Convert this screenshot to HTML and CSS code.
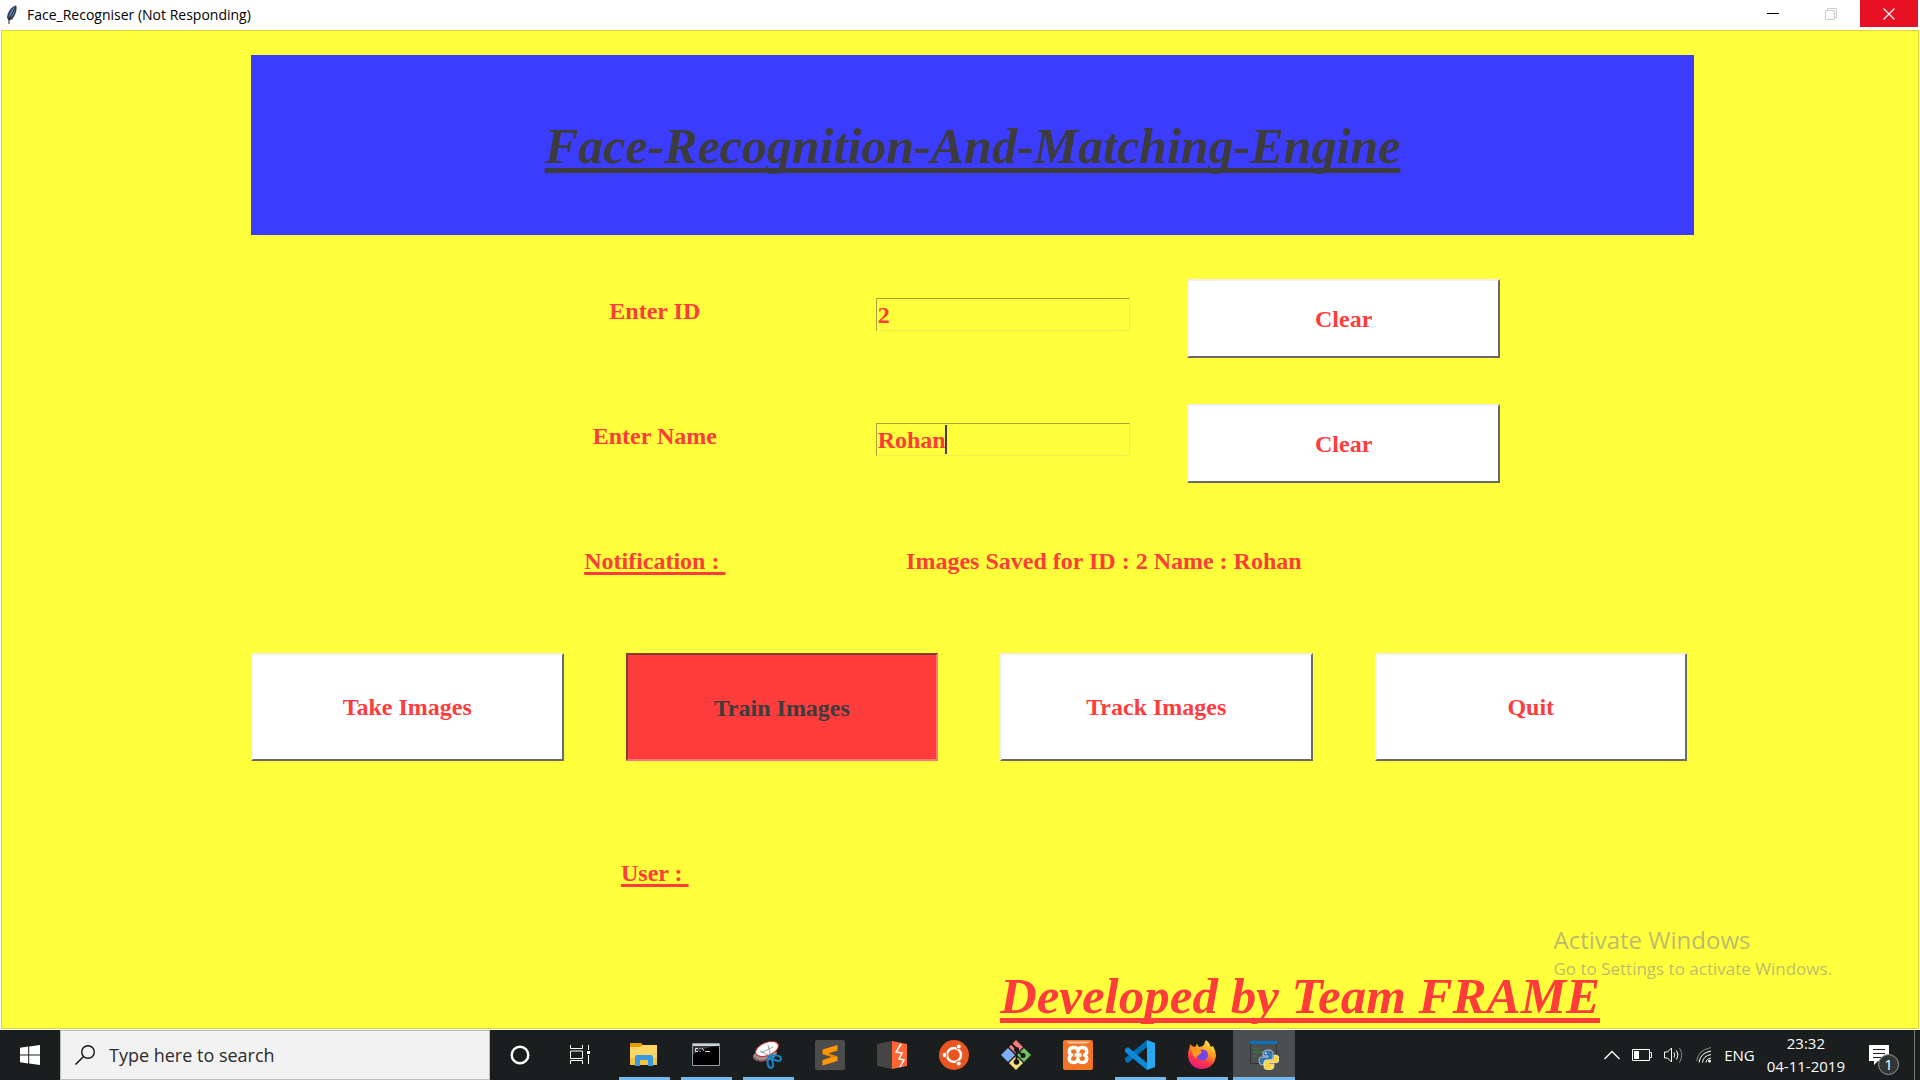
FILE: index.html
```html
<!DOCTYPE html>
<html lang="en">
<head>
<meta charset="utf-8">
<meta name="viewport" content="width=device-width, initial-scale=1">
<title>Face_Recogniser</title>
<link rel="stylesheet" href="styles.css">
</head>
<body>
<header class="titlebar">
  <svg class="feather" viewBox="0 0 12 20" width="12" height="20" aria-hidden="true"><path d="M9.500 0.500C5 2 1.500 7 1 12.500L2.500 15.500 6 14.500C9 11 11 6 10.500 1Z" fill="#33404f"/><path d="M9 1.500C6 3.500 3.500 8 3 12.500L5.500 12C8 9 9.500 5 9 1.500Z" fill="#5b8fd0"/><path d="M9.500 2 3 14.500V19" fill="none" stroke="#222"/></svg>
  <span class="titlebar-text">Face_Recogniser (Not Responding)</span>
  <div class="window-controls">
    <button class="window-button" type="button" aria-label="Minimize"><svg viewBox="0 0 12 12" width="12" height="12"><path d="M0 5.500H12" stroke="#000"/></svg></button>
    <button class="window-button" type="button" aria-label="Restore"><svg viewBox="0 0 12 12" width="12" height="12"><path d="M.5 2.500H9.500V11.500H.5ZM2.500 2.500V.5H11.500V9.500H9.500" fill="none" stroke="#ccc"/></svg></button>
    <button class="window-button close" type="button" aria-label="Close"><svg viewBox="0 0 12 12" width="12" height="12"><path d="M.5 .5 11.500 11.500M11.500 .5 .5 11.500" stroke="#fff" stroke-width="1.200"/></svg></button>
  </div>
</header>

<main class="client">
  <div class="banner"><h1 class="heading">Face-Recognition-And-Matching-Engine</h1></div>

  <form class="form">
    <div class="field-row">
      <label class="label" for="person-id">Enter ID</label>
      <div class="entry"><input class="entry-input" id="person-id" type="text" value="2"></div>
      <button class="tk-button" type="button">Clear</button>
    </div>
    <div class="field-row">
      <label class="label" for="person-name">Enter Name</label>
      <div class="entry"><input class="entry-input" id="person-name" type="text" value="Rohan"><span class="caret"></span></div>
      <button class="tk-button" type="button">Clear</button>
    </div>
  </form>

  <div class="status-row">
    <span class="caption">Notification : </span>
    <output class="message">Images Saved for ID : 2 Name : Rohan</output>
  </div>

  <div class="actions">
    <button class="tk-button tall" type="button">Take Images</button>
    <button class="tk-button tall pressed" type="button">Train Images</button>
    <button class="tk-button tall" type="button">Track Images</button>
    <button class="tk-button tall" type="button">Quit</button>
  </div>

  <div class="status-row user-row">
    <span class="caption">User : </span>
    <output class="message"></output>
  </div>

  <p class="heading credit">Developed by Team FRAME</p>

  <div class="watermark">
    <p class="watermark-title">Activate Windows</p>
    <p class="watermark-text">Go to Settings to activate Windows.</p>
  </div>
</main>

<footer class="taskbar">
  <button class="start" type="button" aria-label="Start"><svg viewBox="0 0 20 20" width="20" height="20"><path d="M0 2.800 8.200 1.600V9.500H0ZM9.200 1.500 20 0V9.500H9.200ZM0 10.500H8.200V18.400L0 17.200ZM9.200 10.500H20V20L9.200 18.500Z" fill="#fff"/></svg></button>
  <label class="search">
    <svg viewBox="0 0 20 20" width="20" height="20" aria-hidden="true"><circle cx="13" cy="7" r="6.300" fill="none" stroke="#111" stroke-width="1.400"/><path d="M8.500 11.500.5 19.500" stroke="#111" stroke-width="1.500"/></svg>
    <input class="search-input" type="text" placeholder="Type here to search" aria-label="Type here to search">
  </label>
  <div class="shell-buttons">
    <button class="app shell" type="button" aria-label="Cortana"><svg viewBox="0 0 30 30" width="30" height="30"><circle cx="15" cy="15" r="8.300" fill="none" stroke="#fff" stroke-width="2.400"/></svg></button>
    <button class="app shell" type="button" aria-label="Task View"><svg viewBox="0 0 30 30" width="30" height="30"><path d="M5.500 5V8.500H17.500V5M5.500 24V20.500H17.500V24M5.500 11H17.500V18.500H5.500ZM23.500 5V10M23.500 15V24" fill="none" stroke="#fff"/><path d="M22 11h3v3h-3z" fill="#fff"/></svg></button>
  </div>
  <nav class="apps">
    <button class="app running" type="button" aria-label="File Explorer"><svg viewBox="0 0 30 30" width="30" height="30"><path d="M1 3H12L14 5V10H1Z" fill="#e29c00"/><path d="M1 7H11L14 5H28V25H1Z" fill="#ffd564"/><path d="M1 18H28V25H1Z" fill="#f5c240"/><path d="M6 26V17Q6 15 8 15H22Q24 15 24 17V26H19V20H11V26Z" fill="#3a9ae0"/></svg></button>
    <button class="app running" type="button" aria-label="Command Prompt"><svg viewBox="0 0 30 30" width="30" height="30"><path d="M1.500 3.500H28.500V25.500H1.500Z" fill="#000" stroke="#929ba4"/><path d="M2 4H28V6H2Z" fill="#cbd1d8"/><path d="M2 6H28Q9 8 2 15Z" fill="#3a3a3a"/><path d="M4.500 8.500H7M4.500 11.500H7M4.500 8.500V11.500M9 8V9M9 11V12M11 8 13 11M14 11.500H19" stroke="#ddd"/></svg></button>
    <button class="app running" type="button" aria-label="Snipping Tool"><svg viewBox="0 0 30 30" width="30" height="30"><ellipse cx="12" cy="15" rx="12" ry="6" transform="rotate(-12 12 15)" fill="#949494"/><path d="M1 17Q6 24 15 19" fill="none" stroke="#a82027"/><ellipse cx="14" cy="9" rx="12" ry="6.500" transform="rotate(-22 14 9)" fill="#fff" stroke="#d4292f"/><path d="M7 11 17 16M15 5 18 17M8 13 20 7" stroke="#999"/><path d="M16 16C13 22 15 28 18 28 22 27 20 20 16 16C20 20 27 23 28 19 28 15 22 15 16 16" fill="none" stroke="#1685c8" stroke-width="2"/></svg></button>
    <button class="app" type="button" aria-label="Sublime Text"><svg viewBox="0 0 30 30" width="30" height="30"><rect width="30" height="30" rx="2" fill="#4c4c4c"/><path d="M22.500 5V10.500L13 13.500 22.500 16.500V21L7.500 25.500V20L17 17 7.500 14V9.500Z" fill="#ff9800"/><path d="M7.500 14 22.500 16.500 17 17Z" fill="#d98200"/></svg></button>
    <button class="app" type="button" aria-label="Burp Suite"><svg viewBox="0 0 30 30" width="30" height="30"><path d="M0 4 15 1V29L0 26Z" fill="#454545"/><path d="M15 1 30 4V26L15 29Z" fill="#ff6633"/><path d="M24 4 19 12 25 13 22 19 27 20 23 27" fill="none" stroke="#fff" stroke-width="1.500"/></svg></button>
    <button class="app" type="button" aria-label="Ubuntu"><svg viewBox="0 0 30 30" width="30" height="30"><circle cx="15" cy="15" r="15" fill="#e95420"/><circle cx="15" cy="15" r="7" fill="none" stroke="#fff" stroke-width="2.500"/><g fill="#fff" stroke="#e95420"><circle cx="5.500" cy="15" r="2.500"/><circle cx="19.800" cy="6.500" r="2.500"/><circle cx="19.800" cy="23.500" r="2.500"/></g></svg></button>
    <button class="app" type="button" aria-label="Git"><svg viewBox="0 0 30 30" width="30" height="30"><path d="M15 0 22 7 15 14 8 7Z" fill="#f47c7c"/><path d="M7 8 14 15 7 22 0 15Z" fill="#80aef5"/><path d="M23 8 30 15 23 22 16 15Z" fill="#72c05b"/><path d="M15 16 22 23 15 30 8 23Z" fill="#f6df82"/><path d="M9 2 15.500 9V22M15.500 10 22 15.500" fill="none" stroke="#171717" stroke-width="2"/><g fill="#171717"><circle cx="15.500" cy="9.500" r="2.500"/><circle cx="15.500" cy="22" r="2.800"/><circle cx="22" cy="15.500" r="2.500"/></g></svg></button>
    <button class="app" type="button" aria-label="XAMPP"><svg viewBox="0 0 30 30" width="30" height="30"><rect width="30" height="30" rx="2" fill="#ef7425"/><path d="M3 1.500H27L24 3.500H6Z" fill="#f9c5a0"/><path d="M15 11.500C15 8.500 13 7.500 10.500 7.500 5.500 7.500 5 13 8.500 15 5 17 5.500 22.500 10.500 22.500 13 22.500 15 21.500 15 18.500 15 21.500 17 22.500 19.500 22.500 24.500 22.500 25 17 21.500 15 25 13 24.500 7.500 19.500 7.500 17 7.500 15 8.500 15 11.500ZM11.500 15H18.500" fill="none" stroke="#fff" stroke-width="3.400" stroke-linejoin="round"/></svg></button>
    <button class="app running" type="button" aria-label="Visual Studio Code"><svg viewBox="0 0 30 30" width="30" height="30"><path d="M22 7V0L0 18V21L3 23Z" fill="#0070b8"/><path d="M22 23V30L0 12V9L3 7Z" fill="#0a8ad8"/><path d="M22 0 30 3V27L22 30Z" fill="#29a8f2"/></svg></button>
    <button class="app running" type="button" aria-label="Firefox"><svg viewBox="0 0 30 30" width="30" height="30"><defs><linearGradient id="fox" x1=".8" y1="0" x2=".3" y2="1"><stop stop-color="#fff44f"/><stop offset=".4" stop-color="#ff9a1e"/><stop offset=".7" stop-color="#ff3647"/><stop offset="1" stop-color="#e31587"/></linearGradient></defs><path d="M3 4Q5 7 8 7L10 4 12 7Q15 7 17 5 18 1 19 0 22 2 24 7L26 6Q29 11 29 16C28 24 22 29 15 29 7 29 1 23 1 15 1 10 3 8 3 4Z" fill="url(#fox)"/><circle cx="15.500" cy="15" r="5.500" fill="#7542e5"/><path d="M4 8Q12 8 15 12L12 15Q9 16 9 19L6 15Z" fill="#ff9a1e"/></svg></button>
    <button class="app running active" type="button" aria-label="Python"><svg viewBox="0 0 30 30" width="30" height="30"><path d="M1.500 2V23.500H27.500V2" fill="#4c5050" stroke="#303334"/><path d="M1 1H28V4H1Z" fill="#0873b9"/><path d="M4 9H10M5 12H15M4 16H8" stroke="#298b36"/><g stroke="#dbe6ee" stroke-width=".7"><path d="M19 10Q14 10 14 14V16H19V17H12Q10 17 10 21 10 25 13 25H15V22Q15 20 18 20H22Q24 20 24 17V13Q24 10 19 10Z" fill="#3776ab"/><path d="M20 30Q25 30 25 26V24H20V23H27Q30 23 30 19 30 15 27 15H25V18Q25 20 22 20H18Q15 20 15 23V27Q15 30 20 30Z" fill="#ffd43b"/></g><path d="M16 12.500h1.500v1.500H16zM22 26.500h1.500V28H22z" fill="#fff"/></svg></button>
  </nav>
  <div class="tray">
    <svg viewBox="0 0 16 10" width="16" height="10" aria-hidden="true"><path d="M.5 9 8 1.500 15.500 9" fill="none" stroke="#fff" stroke-width="1.300"/></svg>
    <svg viewBox="0 0 20 12" width="20" height="12" aria-hidden="true"><path d="M.5 .5H17.500V11.500H.5ZM18 3.500H19.500V8.500H18" fill="none" stroke="#fff"/><path d="M2 2H7V10H2Z" fill="#fff"/></svg>
    <svg viewBox="0 0 20 18" width="20" height="18" aria-hidden="true"><path d="M.5 6H3.500L7.500 2V16L3.500 12H.5ZM10 6.500Q11.500 9 10 11.500M12.500 4.500Q15.500 9 12.500 13.500" fill="none" stroke="#fff"/><path d="M15.500 2Q20 9 15.500 16.500" fill="none" stroke="#888"/></svg>
    <svg viewBox="0 0 16 16" width="16" height="16" aria-hidden="true"><g fill="none" stroke="#fff"><path d="M.6 14Q2 3 15 .6" stroke="#888"/><path d="M3 15.500Q4 6 15 4"/><path d="M6.500 15.500Q7 9 15 7.500"/><path d="M10 15.500Q10 12 15 11"/></g><circle cx="13.500" cy="14" r="1.500" fill="#fff"/></svg>
    <span class="language">ENG</span>
    <time class="clock" datetime="2019-11-04T23:32"><span>23:32</span><span>04-11-2019</span></time>
    <button class="notifications" type="button" aria-label="Notifications"><svg viewBox="0 0 20 20" width="20" height="20"><path d="M0 0H20V16H9L5 20V16H0Z" fill="#fff"/><path d="M4 4.500H16M4 8.500H16M4 12.500H12" stroke="#1b1e1f"/></svg><span class="badge">1</span></button>
  </div>
</footer>
</body>
</html>
```
FILE: styles.css
```css
* { box-sizing: border-box; }

body {
  margin: 0;
  min-height: 100vh;
  display: flex;
  flex-direction: column;
  background: #fff;
  font-family: "Segoe UI", "Open Sans", sans-serif;
}

button, input { font: inherit; }
button { padding: 0; border: 0; background: none; }
h1, p { margin: 0; }
svg { display: block; flex: none; }

/* Window title bar */
.titlebar {
  height: 30px;
  display: flex;
  align-items: center;
  gap: 9px;
  padding: 0 2px 1px 6px;
}
.titlebar-text { font-size: 14px; line-height: 20px; color: #000; }
.window-controls { display: flex; margin-left: auto; align-self: flex-start; }
.window-button { width: 58px; height: 27px; display: grid; place-items: center; }
.window-button.close { background: #e81123; }

/* Application window */
.client {
  flex: 1;
  position: relative;
  display: flex;
  flex-direction: column;
  margin: 0 1px 1px;
  padding: 24px 224px 2px 249px;
  border: 1px solid #d9d93a;
  background: #ffff3c;
  color: #ff3c3c;
  font-family: "Liberation Serif", "Times New Roman", serif;
  font-size: 24px;
  line-height: 30px;
  font-weight: 700;
}
.banner { padding: 61px 0 59px; background: #3c3cff; color: #3c3c3c; text-align: center; }
.heading {
  font-size: 50px;
  line-height: 60px;
  font-style: italic;
  font-weight: 700;
  text-decoration: underline;
  text-decoration-thickness: 5px;
  text-underline-offset: 5px;
  text-decoration-skip-ink: none;
}

.form { display: grid; gap: 46px; padding: 44px 194px 0 240px; }
.field-row { display: grid; grid-template-columns: 328fr 255fr 313fr; column-gap: 57px; align-items: start; }
.label { padding-top: 17px; text-align: center; }
.entry { position: relative; margin-top: 19px; }
.entry-input {
  display: block;
  width: 100%;
  height: 33px;
  padding: 2px 1px 0;
  border: 1px solid;
  border-color: #a5a53c #eeee50 #eeee50 #a5a53c;
  border-radius: 0;
  outline: 0;
  background: transparent;
  color: inherit;
}
.caret { position: absolute; left: 69px; top: 2px; width: 2px; height: 29px; background: #3c3c3c; }

.tk-button {
  height: 79px;
  border: 2px solid;
  border-color: #f0f0f0 #6a6a6a #6a6a6a #f0f0f0;
  background: #fff;
  color: #ff3c3c;
  text-align: center;
}
.tk-button.tall { height: 108px; }
.tk-button.pressed { padding-top: 2px; border-color: #823c3c #ff7878 #ff7878 #823c3c; background: #ff3c3c; color: #3c3c3c; }

.status-row {
  display: grid;
  grid-template-columns: 328fr 457fr 111fr;
  column-gap: 57px;
  padding: 63px 194px 0 240px;
}
.caption {
  justify-self: center;
  white-space: pre;
  text-decoration: underline;
  text-decoration-thickness: 3px;
  text-underline-offset: 3px;
}
.message { text-align: center; white-space: nowrap; }
.actions { display: grid; grid-template-columns: repeat(4, 1fr); gap: 62px; padding: 77px 7px 0 0; }
.user-row { padding-top: 97px; }
.credit { margin: auto 94px 0 0; font-size: 51px; text-align: right; }

.watermark {
  position: absolute;
  right: 86px;
  bottom: 47px;
  color: rgba(140, 140, 140, .6);
  font-family: "Segoe UI", "Open Sans", sans-serif;
  font-weight: 400;
}
.watermark-title { font-size: 24px; line-height: 34px; }
.watermark-text { font-size: 17px; line-height: 24px; }

/* Taskbar */
.taskbar { height: 50px; display: flex; background: #1b1e1f; color: #fff; }
.start { width: 60px; display: grid; place-items: center; }
.search {
  width: 430px;
  display: flex;
  align-items: center;
  gap: 14px;
  padding: 0 15px 0 14px;
  border: 1px solid #bcbcbc;
  background: #f2f2f2;
}
.search-input { flex: 1; min-width: 0; padding: 0; border: 0; outline: 0; background: none; font-size: 18px; line-height: 24px; }
.search-input::placeholder { color: #2b2b2b; opacity: 1; }
.shell-buttons { display: flex; margin-right: 3px; }
.apps { display: flex; }
.app { width: 62px; display: grid; place-items: center; background: linear-gradient(#76b9ed, #76b9ed) center bottom / 0 3px no-repeat; }
.app.shell { width: 60px; }
.app.running { background-size: 51px 3px; }
.app.active { background-color: #4b4f50; background-size: 100% 3px; }

.tray { display: flex; align-items: center; gap: 12px; margin-left: auto; margin-right: 5px; padding-right: 25px; border-right: 1px solid #777; }
.language { font-size: 15px; }
.clock { display: grid; font-size: 15px; line-height: 23px; text-align: center; }
.notifications { position: relative; margin-left: 12px; color: #fff; }
.badge {
  position: absolute;
  left: 9px;
  top: 9px;
  width: 21px;
  height: 21px;
  border: 1px solid #999;
  border-radius: 50%;
  background: #333637;
  font-size: 15px;
  line-height: 19px;
}
```
